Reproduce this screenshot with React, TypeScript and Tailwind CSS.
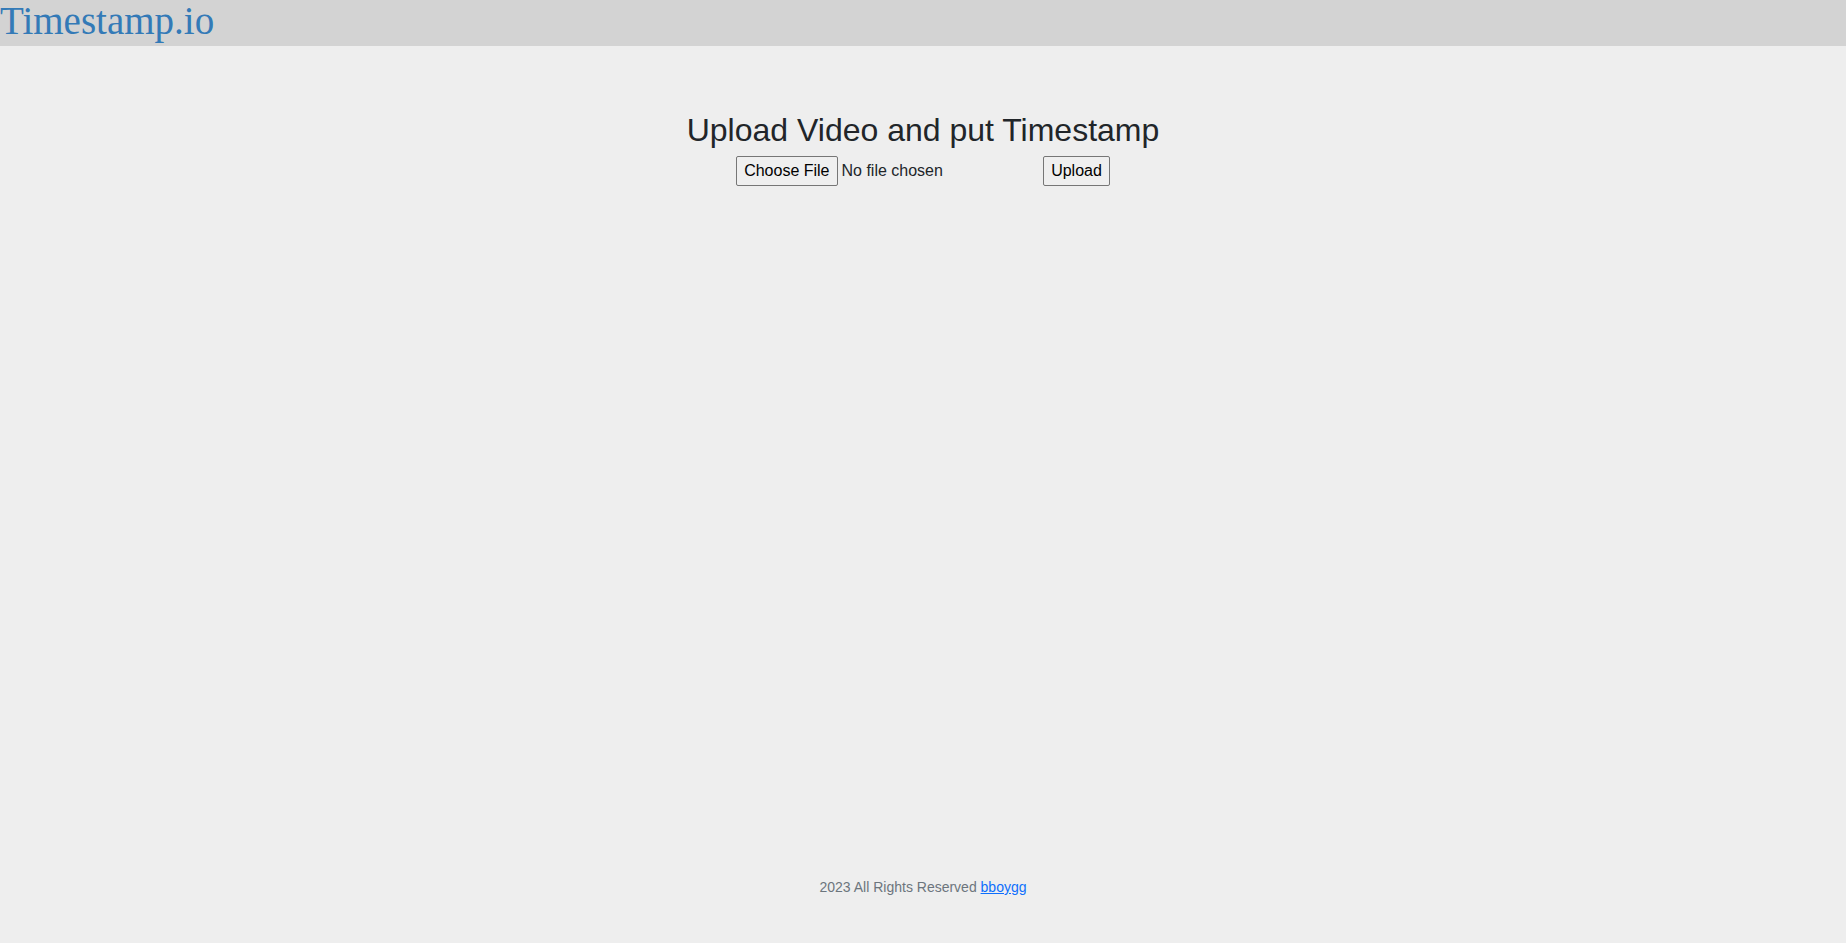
export default function App() {
  return (
    <div className="min-h-screen flex flex-col bg-[#eeeeee] font-['Liberation_Sans',Arial,sans-serif] text-[#212529]">
      <header className="h-[46px] bg-[#d3d3d3] flex items-start">
        <a href="#" className="text-[39px] leading-[46px] font-['Liberation_Serif',serif] text-[#337ab7] -mt-[2px]">
          Timestamp.io
        </a>
      </header>
      <main className="flex-1 flex flex-col items-center pt-[65px]">
        <h1 className="text-[32px] leading-[38px] font-normal">Upload Video and put Timestamp</h1>
        <form className="mt-[7px] flex items-center" onSubmit={(e) => e.preventDefault()}>
          <input
            type="file"
            className="h-[30px] text-base text-[#212529] w-[307px] file:mr-[4px] file:px-[7px] file:h-[30px] file:border file:border-[#767676] file:rounded-[2px] file:bg-[#efefef] file:text-black file:text-base"
          />
          <button
            type="submit"
            className="h-[30px] px-[7px] border border-[#767676] rounded-[2px] bg-[#efefef] text-base text-black"
          >
            Upload
          </button>
        </form>
      </main>
      <footer className="pb-[45px] text-center text-[14px] text-[#6c757d]">
        2023 All Rights Reserved{" "}
        <a href="#" className="text-[#0d6efd] underline">
          bboygg
        </a>
      </footer>
    </div>
  );
}
